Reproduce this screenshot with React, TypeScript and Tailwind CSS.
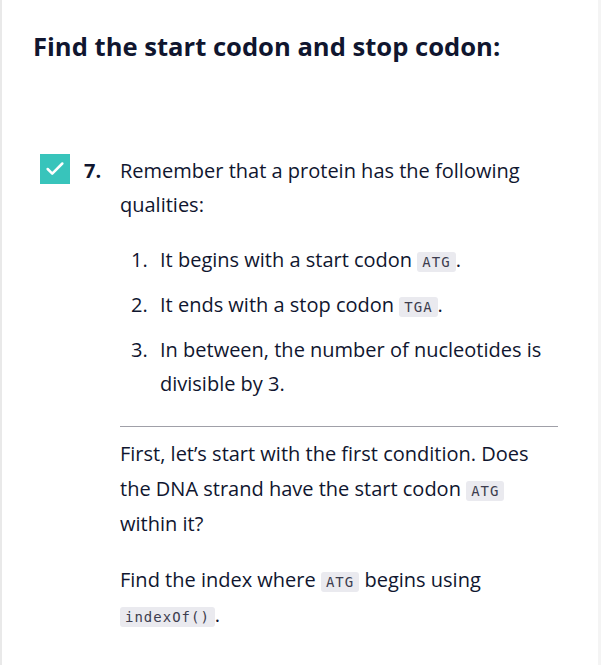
import { Check } from "lucide-react";

function Code({ children }: { children: string }) {
  return (
    <code className="rounded-[3px] bg-[#eaeaef] px-[5px] py-[2px] font-['DejaVu_Sans_Mono',monospace] text-[14px] leading-none tracking-[1px] text-[#3d3d4e]">
      {children}
    </code>
  );
}

const QUALITIES = [
  <>
    It begins with a start codon <Code>ATG</Code>.
  </>,
  <>
    It ends with a stop codon <Code>TGA</Code>.
  </>,
  <>In between, the number of nucleotides is divisible by 3.</>,
];

export default function App() {
  return (
    <div className="min-h-[665px] border-l-2 border-r-[3px] border-l-[#e9e9e9] border-r-[#f4f4f4] bg-white font-['Open_Sans',sans-serif] text-[#10162f]">
      <h2 className="pl-[31px] pt-[30px] text-[25.6px] font-bold leading-[34px]">
        Find the start codon and stop codon:
      </h2>

      {/* task */}
      <div className="mt-[90px] flex pl-[38px] pr-[40px]">
        <div className="flex h-[30px] w-[30px] shrink-0 items-center justify-center bg-[#38c4bb]">
          <Check className="h-[22px] w-[22px] text-white" strokeWidth={2.75} />
        </div>
        <div className="ml-[14px] w-[30px] shrink-0 text-[20px] font-bold leading-[34px]">
          7.
        </div>
        <div className="flex-1 pl-[6px] text-[20px] leading-[34px]">
          <p>Remember that a protein has the following qualities:</p>
          <ol className="mt-[21px] pl-[11px]">
            {QUALITIES.map((q, i) => (
              <li key={i} className="mb-[11px] flex">
                <span className="w-[29px] shrink-0">{i + 1}.</span>
                <span>{q}</span>
              </li>
            ))}
          </ol>
          <hr className="mt-[25px] border-t border-[#a0a0a8]" />
          <p className="mt-[9px] leading-[35px]">
            First, let’s start with the first condition. Does the DNA strand have the start codon{" "}
            <Code>ATG</Code> within it?
          </p>
          <p className="mt-[21px] leading-[35px]">
            Find the index where <Code>ATG</Code> begins using <Code>indexOf()</Code>.
          </p>
        </div>
      </div>
    </div>
  );
}
